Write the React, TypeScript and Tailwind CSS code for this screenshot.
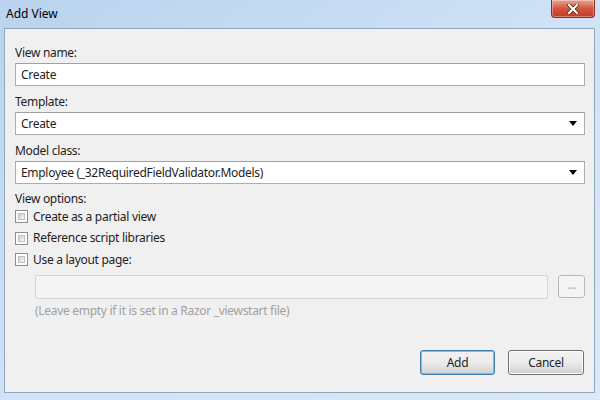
const font = { fontFamily: '"Segoe UI", "Noto Sans", "Open Sans", sans-serif' }

function Arrow() {
    return (
        <svg width="8" height="5" viewBox="0 0 8 5" className="shrink-0">
            <path d="M0 0 H8 L4 5 Z" fill="#000" />
        </svg>
    )
}

function CheckRow({ label }: { label: string }) {
    return (
        <div className="flex h-[21.5px] items-center gap-[5px]">
            <div className="h-[13px] w-[13px] border border-[#8e8f8f] bg-white p-[2px]">
                <div className="h-full w-full border border-[#c0c0c0] bg-gradient-to-br from-[#cbcfd5] to-[#f6f6f6]" />
            </div>
            <span>{label}</span>
        </div>
    )
}

function Select({ value }: { value: string }) {
    return (
        <div className="flex h-[23px] items-center justify-between border border-[#abadb3] border-t-[#a0a0a0] bg-white pl-[5px] pr-[7px]">
            <span>{value}</span>
            <Arrow />
        </div>
    )
}

export default function App() {
    return (
        <div
            className="flex h-[400px] w-[600px] flex-col bg-gradient-to-br from-[#b9d3ee] via-[#cfe2f6] to-[#dbe9f8] text-[12px] tracking-[-0.3px] text-[#1e1e1e]"
            style={font}
        >
            {/* title bar */}
            <div className="flex h-[28px] items-start justify-between pl-[6px]">
                <span className="mt-[5px] text-[12px] tracking-normal text-black">Add View</span>
                <button className="mr-[5px] flex h-[18px] w-[44px] items-center justify-center rounded-b-[4px] border border-t-0 border-[#8a2d24] bg-gradient-to-b from-[#e8a493] via-[#d2553f] to-[#c53a25] shadow-[inset_0_0_0_1px_rgba(255,255,255,0.35)]">
                    <svg width="12" height="10" viewBox="0 0 12 10">
                        <path d="M2 1 L10 9 M10 1 L2 9" stroke="#4a1a12" strokeWidth="3.6" strokeLinecap="square" />
                        <path d="M2 1 L10 9 M10 1 L2 9" stroke="#fff" strokeWidth="2.2" strokeLinecap="square" />
                    </svg>
                </button>
            </div>

            {/* client area */}
            <div className="mb-[7px] ml-[4px] mr-[5px] flex flex-1 flex-col border border-[#8fa6bf] bg-[#f0f0f0] pl-[10px] pr-[9px]">
                <div className="mt-[16px] h-[18px] leading-[16px]">View name:</div>
                <div className="flex h-[23px] items-center border border-[#abadb3] border-t-[#a0a0a0] bg-white pl-[5px]">
                    Create
                </div>

                <div className="mt-[8px] h-[18px] leading-[16px]">Template:</div>
                <Select value="Create" />

                <div className="mt-[8px] h-[18px] leading-[16px]">Model class:</div>
                <Select value="Employee (_32RequiredFieldValidator.Models)" />

                <div className="mt-[7px] h-[15px] leading-[16px]">View options:</div>
                <CheckRow label="Create as a partial view" />
                <CheckRow label="Reference script libraries" />
                <CheckRow label="Use a layout page:" />

                <div className="mt-[4px] flex items-center pl-[20px]">
                    <div className="h-[24px] flex-1 rounded-[2px] border border-[#d5d5d5] bg-[#f4f4f4]" />
                    <div className="ml-[10px] flex h-[23px] w-[27px] items-center justify-center rounded-[3px] border border-[#b8b8b8] bg-[#f4f4f4] pb-[4px] text-[#a8a8a8]">
                        ...
                    </div>
                </div>
                <div className="mt-[3px] pl-[20px] text-[#a0a0a0]">(Leave empty if it is set in a Razor _viewstart file)</div>

                <div className="mt-auto mb-[17px] flex justify-end gap-[13px] pr-[1px]">
                    <button className="h-[25px] w-[75px] rounded-[3px] border border-[#3c7fb1] bg-gradient-to-b from-[#f2f2f2] via-[#ebebeb] to-[#cfcfcf] shadow-[inset_0_0_0_1px_#62c8e8] text-[#1e1e1e]">
                        Add
                    </button>
                    <button className="h-[25px] w-[76px] rounded-[3px] border border-[#707070] bg-gradient-to-b from-[#f2f2f2] via-[#ebebeb] to-[#cfcfcf] shadow-[inset_0_0_0_1px_#fcfcfc] text-[#1e1e1e]">
                        Cancel
                    </button>
                </div>
            </div>
        </div>
    )
}
